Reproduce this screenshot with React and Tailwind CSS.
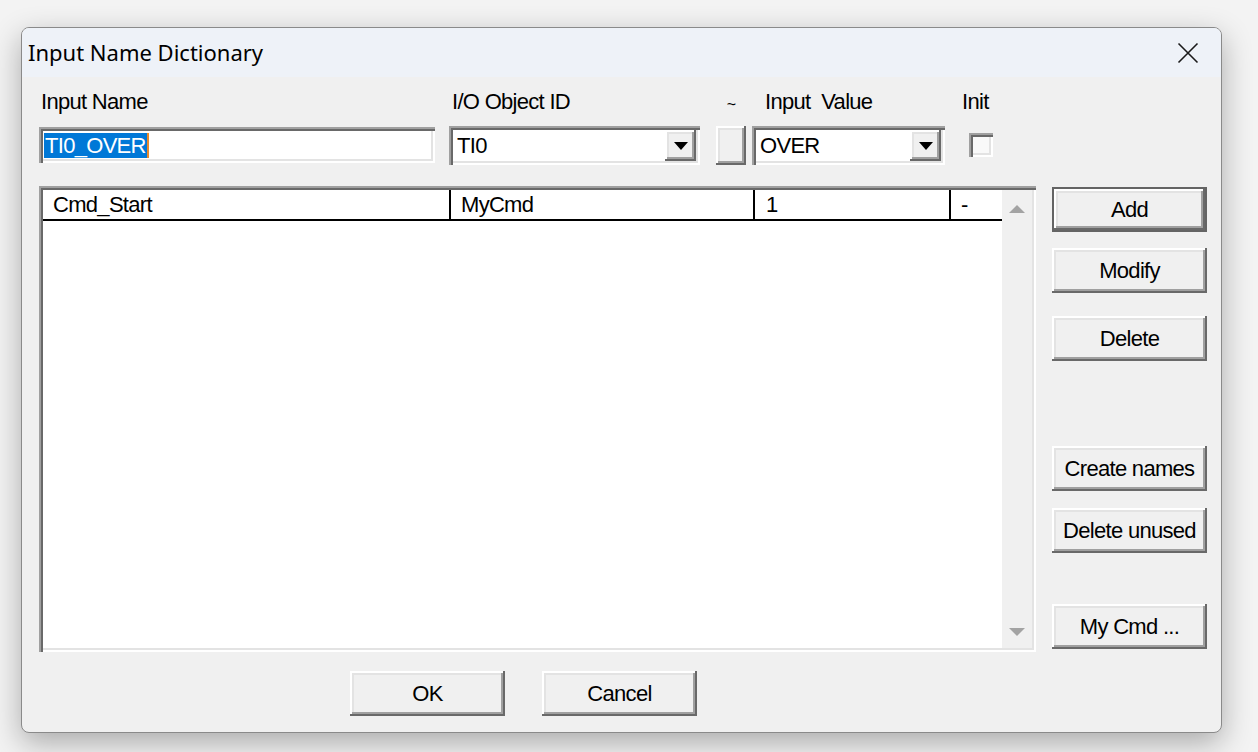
import React from 'react';

const sunken =
  'shadow-[inset_2px_2px_0_#a0a0a0,inset_4px_4px_0_#696969,inset_-2px_-2px_0_#ffffff,inset_-4px_-4px_0_#e3e3e3]';
const raised =
  'shadow-[inset_-2px_-2px_0_#696969,inset_2px_2px_0_#ffffff,inset_-4px_-4px_0_#a0a0a0,inset_4px_4px_0_#e3e3e3]';
const ui = "font-['Liberation_Sans',Arial,sans-serif] text-[22px] tracking-[-0.7px] text-black";

const Button = ({ children, isDefault, className = '' }) => (
  <div
    className={
      isDefault
        ? `w-[155px] h-[45px] border-2 border-[#646464] bg-[#f0f0f0] ${className}`
        : `w-[155px] h-[45px] bg-[#f0f0f0] ${raised} ${className}`
    }
  >
    <div className={isDefault ? `w-full h-full flex items-center justify-center ${raised}` : 'w-full h-full flex items-center justify-center'}>
      {children}
    </div>
  </div>
);

const Combo = ({ value, width }) => (
  <div className={`${width} h-[39px] bg-white flex items-stretch p-[4px] ${sunken}`}>
    <div className="flex-1 flex items-center pl-[4px]">{value}</div>
    <div className={`w-[31px] bg-[#f0f0f0] flex items-center justify-center ${raised}`}>
      <svg width="14" height="8" viewBox="0 0 14 8">
        <path d="M0 0 H14 L7 8 Z" fill="#000" />
      </svg>
    </div>
  </div>
);

const Triangle = ({ down }) => (
  <svg width="18" height="10" viewBox="0 0 18 10">
    <path d={down ? 'M1 1 H17 L9 9 Z' : 'M1 9 H17 L9 1 Z'} fill="#a3a3a3" />
  </svg>
);

export default function App() {
  return (
    <div className="w-[1258px] h-[752px] bg-[#f3f3f3] pt-[27px] pl-[21px] overflow-hidden">
      <div className="w-[1201px] h-[706px] rounded-[8px] border border-[#8a8a8a] bg-[#f0f0f0] shadow-[0_10px_30px_rgba(0,0,0,0.3)] overflow-hidden flex flex-col">
        {/* Title bar */}
        <div className="h-[49px] bg-[#eef2f8] flex items-center justify-between pl-[6px] pr-[22px] shrink-0">
          <span className="font-['Noto_Sans',sans-serif] text-[22px] text-black">Input Name Dictionary</span>
          <svg width="22" height="22" viewBox="0 0 22 22">
            <path d="M1.5 1.5 L20.5 20.5 M20.5 1.5 L1.5 20.5" stroke="#1a1a1a" strokeWidth="1.6" />
          </svg>
        </div>

        {/* Body */}
        <div className={`flex-1 pl-[17px] ${ui}`}>
          {/* Fields */}
          <div className="flex items-start mt-[13px]">
            <div className="w-[396px] flex flex-col">
              <div className="h-[24px] leading-[24px] pl-[2px]">Input Name</div>
              <div className={`mt-[13px] h-[36px] bg-white flex items-center pl-[5px] ${sunken}`}>
                <span className="bg-[#0078d7] text-white leading-[25px] px-[1px]">TI0_OVER</span>
                <span className="w-[2px] h-[25px] bg-[#e8892a]" />
              </div>
            </div>
            <div className="ml-[14px] w-[251px] flex flex-col">
              <div className="h-[24px] leading-[24px] pl-[3px]">I/O Object ID</div>
              <div className="mt-[12px]">
                <Combo value="TI0" width="w-[251px]" />
              </div>
            </div>
            <div className="ml-[16px] w-[30px] flex flex-col">
              <div className="h-[24px] leading-[30px] text-center text-[16px]">~</div>
              <div className={`mt-[12px] h-[39px] bg-[#f0f0f0] ${raised}`} />
            </div>
            <div className="ml-[6px] w-[193px] flex flex-col">
              <div className="h-[24px] leading-[24px] pl-[13px] whitespace-pre">Input  Value</div>
              <div className="mt-[12px]">
                <Combo value="OVER" width="w-[193px]" />
              </div>
            </div>
            <div className="ml-[24px] w-[24px] flex flex-col">
              <div className="h-[24px] leading-[24px] -ml-[7px]">Init</div>
              <div className={`mt-[19px] w-[24px] h-[24px] bg-[#f9f9f9] ${sunken}`} />
            </div>
          </div>

          {/* List and side buttons */}
          <div className="flex items-start mt-[21px]">
            <div className={`w-[997px] h-[466px] bg-white p-[4px] flex ${sunken}`}>
              <div className="flex-1 bg-white">
                <div className="h-[31px] flex border-b-2 border-black">
                  <div className="w-[408px] pl-[10px] border-r-2 border-black flex items-center">Cmd_Start</div>
                  <div className="w-[304px] pl-[10px] border-r-2 border-black flex items-center">MyCmd</div>
                  <div className="w-[196px] pl-[11px] border-r-2 border-black flex items-center">1</div>
                  <div className="flex-1 pl-[10px] flex items-center">-</div>
                </div>
              </div>
              <div className="w-[30px] bg-[#f0f0f0] flex flex-col items-center justify-between pt-[14px] pb-[11px]">
                <Triangle />
                <Triangle down />
              </div>
            </div>
            <div className="ml-[16px] mt-[1px] flex flex-col">
              <Button isDefault>Add</Button>
              <Button className="mt-[16px]">Modify</Button>
              <Button className="mt-[23px]">Delete</Button>
              <Button className="mt-[85px]">Create names</Button>
              <Button className="mt-[17px]">Delete unused</Button>
              <Button className="mt-[51px]">My Cmd ...</Button>
            </div>
          </div>

          {/* Bottom buttons */}
          <div className="flex mt-[19px] ml-[311px]">
            <Button>OK</Button>
            <Button className="ml-[37px]">Cancel</Button>
          </div>
        </div>
      </div>
    </div>
  );
}
